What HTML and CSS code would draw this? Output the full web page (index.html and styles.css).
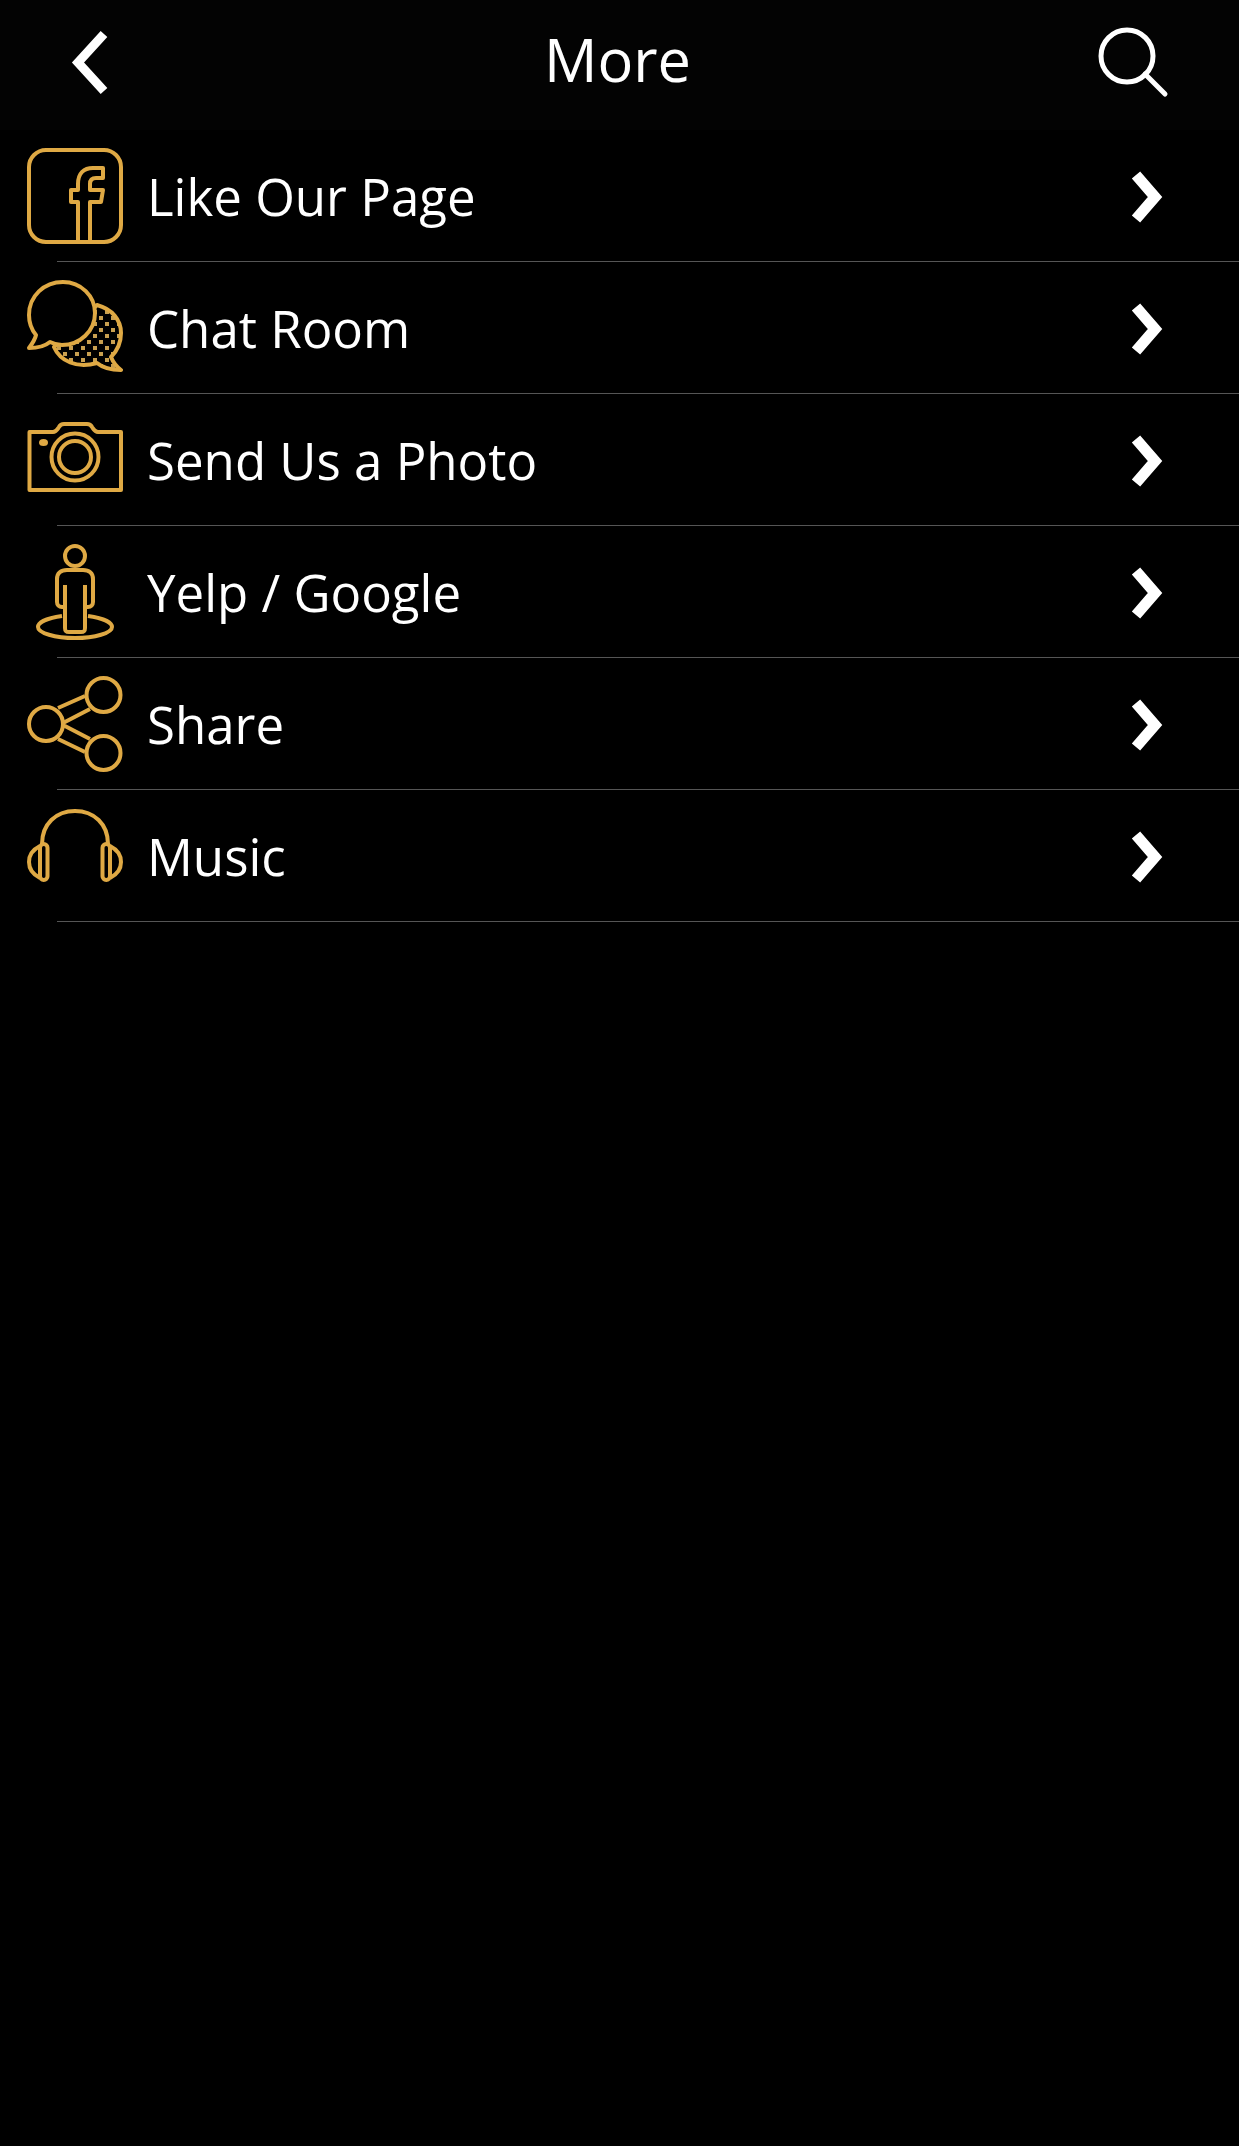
FILE: index.html
```html
<!DOCTYPE html>
<html>
<head>
    <title>More</title>
    <link rel="stylesheet" href="styles.css">
</head>
<body>
    <div class="topbar">
        <svg class="back-icon" viewBox="0 0 44 68"><path d="M36 5 L10 33.500 L36 62"/></svg>
        <div class="topbar-title">More</div>
        <svg class="search-icon" viewBox="0 0 76 76"><circle cx="30" cy="30" r="26"/><path d="M48 48 L68 68"/></svg>
    </div>

    <div class="menu">
        <div class="menu-row">
            <svg class="menu-icon" viewBox="0 0 96 96">
                <rect x="2" y="2" width="92" height="92" rx="17"/>
                <path d="M51 94 V54 H44 V42 H51 V36 C51 25 57 20 66 20 H76 V30 H69 C65 30 63 32 63 36 V42 H76 L74 54 H63 V94"/>
            </svg>
            <div class="menu-label">Like Our Page</div>
            <svg class="chevron" viewBox="0 0 36 56"><path d="M5 7 L24 29 L5 51"/></svg>
        </div>
        <div class="menu-row">
            <svg class="menu-icon" viewBox="0 0 96 96">
                <defs>
                    <pattern id="dots" width="12" height="12" patternUnits="userSpaceOnUse">
                        <rect x="0" y="0" width="4" height="4"/>
                        <rect x="6" y="6" width="4" height="4"/>
                    </pattern>
                </defs>
                <path class="dotted" d="M70 25 C85 29 94 40 94 53 C94 63 90 71 84 77 C86 82 90 87 94 90 C85 90 76 88 70 83 C50 89 33 81 27 67 Z"/>
                <path class="cutout" d="M9 55 C4 49 2 42 2 35 C2 16 17 2 36 2 C54 2 68 16 68 33 C68 51 53 65 35 65 C31 65 27 64 23 62 C17 67 10 68 2 68 C5 64 8 60 9 55 Z"/>
            </svg>
            <div class="menu-label">Chat Room</div>
            <svg class="chevron" viewBox="0 0 36 56"><path d="M5 7 L24 29 L5 51"/></svg>
        </div>
        <div class="menu-row">
            <svg class="menu-icon" viewBox="0 0 96 96">
                <path d="M2.500 20 H26 C29 20 30 18 32 15 C33 13 35 12 37 12 H60 C62 12 64 13 65 15 C67 18 68 20 71 20 H94 V78 H2.500 Z"/>
                <circle cx="48" cy="45" r="23.500"/>
                <circle cx="48" cy="45" r="16"/>
                <ellipse class="solid" cx="16.500" cy="30.500" rx="4.500" ry="3.500"/>
            </svg>
            <div class="menu-label">Send Us a Photo</div>
            <svg class="chevron" viewBox="0 0 36 56"><path d="M5 7 L24 29 L5 51"/></svg>
        </div>
        <div class="menu-row">
            <svg class="menu-icon" viewBox="0 0 96 96">
                <circle cx="48" cy="12" r="10"/>
                <path d="M38 41 V63 H35 C32 63 30 61 30 58 V35 C30 29 34 26 40 26 H56 C62 26 66 29 66 35 V58 C66 61 64 63 61 63 H58 V41 M38 63 V84 C38 87 39 88 42 88 H54 C57 88 58 87 58 84 V63"/>
                <path d="M35 72 C21 74 11 78 11 83 C11 89 28 94 48 94 C68 94 85 89 85 83 C85 78 75 74 61 72"/>
            </svg>
            <div class="menu-label">Yelp / Google</div>
            <svg class="chevron" viewBox="0 0 36 56"><path d="M5 7 L24 29 L5 51"/></svg>
        </div>
        <div class="menu-row">
            <svg class="menu-icon" viewBox="0 0 96 96">
                <circle cx="76.500" cy="19" r="17"/>
                <circle cx="19" cy="48" r="17"/>
                <circle cx="76.500" cy="77" r="17"/>
                <path d="M31 32 L58 20 M36 47 L63 33 M36 49 L63 63 M31 63 L58 76"/>
            </svg>
            <div class="menu-label">Share</div>
            <svg class="chevron" viewBox="0 0 36 56"><path d="M5 7 L24 29 L5 51"/></svg>
        </div>
        <div class="menu-row">
            <svg class="menu-icon" viewBox="0 0 96 96">
                <path d="M15 36 C15 16 29 3 48 3 C67 3 81 16 81 36"/>
                <rect x="13" y="36" width="7.500" height="36" rx="3.700"/>
                <rect x="75.500" y="36" width="7.500" height="36" rx="3.700"/>
                <path d="M13 38 C5 42 2 48 2 54 C2 60 5 66 13 70"/>
                <path d="M83 38 C91 42 94 48 94 54 C94 60 91 66 83 70"/>
            </svg>
            <div class="menu-label">Music</div>
            <svg class="chevron" viewBox="0 0 36 56"><path d="M5 7 L24 29 L5 51"/></svg>
        </div>
    </div>
</body>
</html>
```

FILE: styles.css
```css
body {
    font-family: 'Open Sans', sans-serif;
    background: #000;
    color: #fff;
    margin: 0;
}
.topbar {
    height: 130px;
    background: #030303;
    display: grid;
    grid-template-columns: 1fr auto 1fr;
    align-items: center;
    padding: 0 66px 0 68px;
}
.back-icon {
    width: 44px;
    height: 68px;
    fill: none;
    stroke: #fff;
    stroke-width: 9;
    margin-top: -4px;
}
.search-icon {
    width: 76px;
    height: 76px;
    fill: none;
    stroke: #fff;
    stroke-width: 5;
    stroke-linecap: round;
    justify-self: end;
    margin-top: -2px;
}
.topbar-title {
    font-size: 59.5px;
    line-height: 1;
    margin-top: -12px;
    margin-right: 6px;
}
.menu-row {
    height: 132px;
    box-sizing: border-box;
    display: flex;
    align-items: center;
    padding-left: 27px;
    background: linear-gradient(#555, #555) no-repeat 57px 100% / 100% 1px;
}
.menu-icon {
    width: 96px;
    height: 96px;
    flex-shrink: 0;
    fill: none;
    stroke: #dfa944;
    stroke-width: 4;
    stroke-linejoin: round;
    margin-right: 24px;
}
.menu-icon .solid {
    fill: #dfa944;
    stroke: none;
}
.menu-icon .dotted {
    fill: url(#dots);
}
.menu-icon pattern rect {
    fill: #c9a050;
    stroke: none;
}
.menu-icon .cutout {
    fill: #000;
}
.menu-label {
    font-size: 51px;
    flex: 1;
}
.chevron {
    width: 36px;
    height: 56px;
    fill: none;
    stroke: #fff;
    stroke-width: 11;
    margin-right: 72px;
}
```
